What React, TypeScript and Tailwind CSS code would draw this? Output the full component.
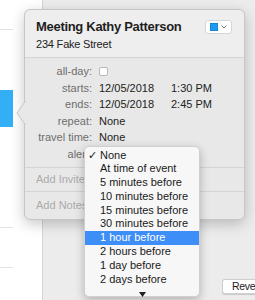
import React from "react";

export default function App() {
  const items = [
    "None",
    "At time of event",
    "5 minutes before",
    "10 minutes before",
    "15 minutes before",
    "30 minutes before",
    "1 hour before",
    "2 hours before",
    "1 day before",
    "2 days before",
  ];
  return (
    <div className="relative flex w-[255px] h-[300px] overflow-hidden font-['Liberation_Sans',Arial,sans-serif] text-[#222]">
      {/* left list */}
      <div className="w-[43px] h-full bg-white border-r border-[#d4d4d4]">
        <div className="w-[13px] h-full flex flex-col">
          <div className="h-[30px] shrink-0 border-b border-[#e2e2e2]" />
          <div className="h-[60px] shrink-0" />
          <div className="h-[37px] shrink-0 bg-[#34aff5]" />
          <div className="h-[101px] shrink-0 border-b border-[#e2e2e2]" />
          <div className="h-[40px] shrink-0 border-b border-[#e2e2e2]" />
        </div>
      </div>

      {/* main calendar area */}
      <div className="flex-1 h-full bg-[#ececec] flex flex-col justify-end items-end pb-[6px]">
        <div className="w-[44px] h-[15px] mr-[-11px] bg-white rounded-[3px] border border-[#cfcfcf] shadow-[0_0.5px_1px_rgba(0,0,0,0.15)] text-[10.5px] leading-[13px] tracking-[-0.3px] pl-[9px] text-[#222] whitespace-nowrap">
          Revert
        </div>
      </div>

      {/* popover */}
      <div className="absolute left-[24px] top-[9px] w-[221px] h-[211px] rounded-[6px] border border-[#c6c6c6] bg-[#e8e8e8] shadow-[0_4px_14px_rgba(0,0,0,0.22)]">
        {/* arrow */}
        <svg
          className="absolute left-[-9px] top-[91px]"
          width="10"
          height="24"
          viewBox="0 0 10 24"
        >
          <polygon points="9.5,0 1,12 9.5,24" fill="#e8e8e8" />
          <polyline points="9.5,0 1,12 9.5,24" fill="none" stroke="#c6c6c6" strokeWidth="1" />
        </svg>

        {/* header */}
        <div className="h-[48px] flex justify-between pl-[11px] pr-[12px] pt-[8px] bg-[#eeeeee] rounded-t-[6px] border-b border-[#d4d4d4]">
          <div className="flex flex-col">
            <div className="h-[17px] leading-[17px] text-[13px] font-bold tracking-[-0.3px] text-[#1e1e1e] whitespace-nowrap">
              Meeting Kathy Patterson
            </div>
            <div className="mt-[2px] h-[15px] leading-[15px] text-[11px] tracking-[-0.2px] text-[#222] whitespace-nowrap">
              234 Fake Street
            </div>
          </div>
          <div className="mt-[2px] w-[27px] h-[14px] bg-white rounded-[3px] border border-[#d6d6d6] flex items-center pl-[4px] gap-[3px]">
            <div className="w-[8px] h-[8px] bg-[#1d9bf0] border border-[#1a85d0]" />
            <svg width="6" height="4" viewBox="0 0 6 4">
              <polyline points="0.5,0.5 3,3 5.5,0.5" fill="none" stroke="#777" strokeWidth="1" />
            </svg>
          </div>
        </div>

        {/* fields */}
        <div className="pt-[5px] pb-[5px] border-b border-[#d4d4d4] text-[11px]">
          <Row label="all-day:">
            <div className="w-[9px] h-[9px] bg-white rounded-[2px] border border-[#b9b9b9]" />
          </Row>
          <Row label="starts:">
            <span className="w-[72px]">12/05/2018</span>
            <span>1:30 PM</span>
          </Row>
          <Row label="ends:">
            <span className="w-[72px]">12/05/2018</span>
            <span>2:45 PM</span>
          </Row>
          <Row label="repeat:">
            <span>None</span>
          </Row>
          <Row label="travel time:">
            <span>None</span>
          </Row>
          <Row label="alert:">
            <span>None</span>
          </Row>
        </div>
        <div className="h-[24px] flex items-center pl-[11px] border-b border-[#d4d4d4] text-[11px] text-[#ababab]">
          Add Invitees
        </div>
        <div className="h-[26px] flex items-center pl-[11px] text-[11px] text-[#ababab]">
          Add Notes
        </div>
      </div>

      {/* dropdown menu */}
      <div className="absolute left-[84px] top-[146px] w-[116px] h-[151px] bg-[#f7f7f7] rounded-[5px] border border-[#d0d0d0] shadow-[0_3px_10px_rgba(0,0,0,0.25)] pt-[1.5px] text-[11px] text-[#1a1a1a]">
        {items.map((t, i) => (
          <div
            key={t}
            className={
              i === 6
                ? "relative h-[13.8px] leading-[13.8px] pl-[15px] whitespace-nowrap bg-[#3d8ef7] text-white"
                : "relative h-[13.8px] leading-[13.8px] pl-[15px] whitespace-nowrap"
            }
          >
            {i === 0 && (
              <span className="absolute left-[3px] top-0 text-[11px]">✓</span>
            )}
            {t}
          </div>
        ))}
        <div className="flex justify-center pt-[6px]">
          <svg width="7" height="5" viewBox="0 0 7 5">
            <polygon points="0,0 7,0 3.5,5" fill="#222" />
          </svg>
        </div>
      </div>
    </div>
  );
}

function Row({ label, children }: { label: string; children: React.ReactNode }) {
  return (
    <div className="h-[16.5px] flex items-center">
      <div className="w-[67px] text-right text-[#6e6e6e] whitespace-nowrap">{label}</div>
      <div className="ml-[7px] flex items-center text-[#222] whitespace-nowrap">{children}</div>
    </div>
  );
}
